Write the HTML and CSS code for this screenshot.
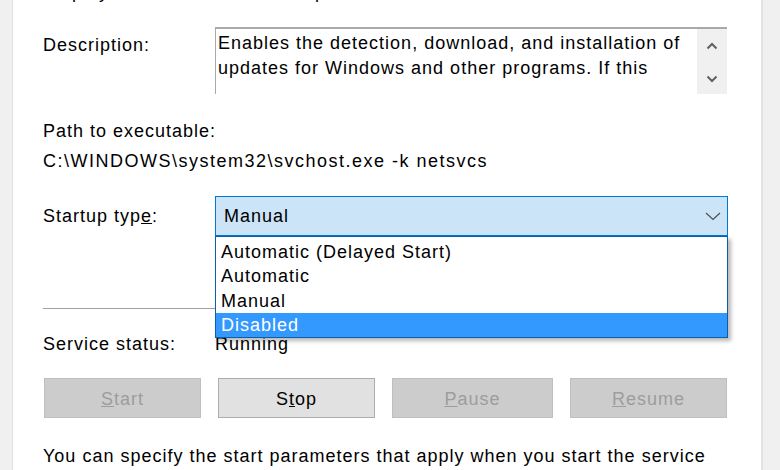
FILE: index.html
```html
<!DOCTYPE html>
<html lang="en">
<head>
    <meta charset="UTF-8">
    <meta name="viewport" content="width=device-width, initial-scale=1.0">
    <title>Windows Update Properties</title>
    <link rel="stylesheet" href="styles.css">
</head>
<body>
    <div class="frame">
        <div class="edge edge-left"></div>

        <div class="panel">
            <div class="row row-name">
                <span class="label">Display name:</span>
                <span>Windows Update</span>
            </div>

            <div class="row row-desc">
                <span class="label">Description:</span>
                <div class="desc-box">
                    <p class="desc-text">Enables the detection, download, and installation of<br>updates for Windows and other programs. If this</p>
                    <div class="scrollbar">
                        <svg width="12" height="8" viewBox="0 0 12 8"><path d="M1.5 6.5 L6 2 L10.5 6.5" fill="none" stroke="#606060" stroke-width="2"/></svg>
                        <svg width="12" height="8" viewBox="0 0 12 8"><path d="M1.5 1.5 L6 6 L10.5 1.5" fill="none" stroke="#606060" stroke-width="2"/></svg>
                    </div>
                </div>
            </div>

            <div class="path">
                <div class="path-label">Path to executable:</div>
                <div class="path-value">C:\WINDOWS\system32\svchost.exe -k netsvcs</div>
            </div>

            <div class="row row-startup">
                <span class="label">Startup typ<u>e</u>:</span>
                <div class="combo-wrap">
                    <div class="combo">
                        <span>Manual</span>
                        <svg width="16" height="9" viewBox="0 0 16 9"><path d="M1 1 L8 7.5 L15 1" fill="none" stroke="#505050" stroke-width="1.2"/></svg>
                    </div>
                    <ul class="combo-list">
                        <li>Automatic (Delayed Start)</li>
                        <li>Automatic</li>
                        <li>Manual</li>
                        <li class="selected">Disabled</li>
                    </ul>
                </div>
            </div>

            <hr class="sep">

            <div class="row row-status">
                <span class="label">Service status:</span>
                <span>Running</span>
            </div>

            <div class="buttons">
                <button class="btn" disabled><u>S</u>tart</button>
                <button class="btn btn-active">S<u>t</u>op</button>
                <button class="btn btn-wide" disabled><u>P</u>ause</button>
                <button class="btn" disabled><u>R</u>esume</button>
            </div>

            <p class="hint">You can specify the start parameters that apply when you start the service<br>from here.</p>
        </div>

        <div class="edge edge-right"></div>
    </div>
</body>
</html>
```

FILE: styles.css
```css
* {
    box-sizing: border-box;
}

body {
    margin: 0;
    background: #f0f0f0;
    font-family: "Liberation Sans", Arial, sans-serif;
    font-size: 18px;
    line-height: 25px;
    letter-spacing: 1px;
    color: #000;
}

.frame {
    display: flex;
    width: 780px;
    height: 470px;
    overflow: hidden;
}

.edge {
    background: #f0f0f0;
}

.edge-left {
    width: 13px;
    border-right: 1px solid #e2e2e2;
}

.edge-right {
    width: 19px;
    border-left: 2px solid #e2e2e2;
}

.panel {
    flex: 1;
    background: #fff;
    padding-left: 30px;
}

.row {
    display: flex;
}

.label {
    width: 172px;
    flex-shrink: 0;
}

.row-name {
    margin-top: -20px;
}

/* description */
.row-desc {
    margin-top: 22px;
    align-items: flex-start;
}

.row-desc .label {
    margin-top: 5.5px;
}

.desc-box {
    display: flex;
    width: 512px;
    height: 67px;
    border-top: 2px solid #a9a9a9;
    border-left: 1px solid #a9a9a9;
    overflow: hidden;
}

.desc-text {
    flex: 1;
    margin: 0;
    padding: 1.5px 0 0 2px;
    white-space: nowrap;
}

.scrollbar {
    width: 30px;
    background: #f0f0f0;
    display: flex;
    flex-direction: column;
    align-items: center;
    justify-content: space-between;
    padding: 13px 0 11px;
}

/* path */
.path {
    margin-top: 24.5px;
}

.path-label {
    margin-bottom: 5px;
}

.path-value {
    letter-spacing: 1.5px;
}

/* startup type */
.row-startup {
    margin-top: 22.5px;
    align-items: center;
}

.combo-wrap {
    position: relative;
    width: 513px;
}

.combo {
    height: 40px;
    background: #cce4f7;
    border: 1px solid #0078d7;
    display: flex;
    align-items: center;
    justify-content: space-between;
    padding: 0 6px 0 8px;
}

.combo-list {
    position: absolute;
    top: 100%;
    left: 0;
    right: 0;
    margin: 0;
    padding: 3px 0 0;
    list-style: none;
    background: #fff;
    border: 1px solid #0a5fa8;
    box-shadow: 3px 3px 4px rgba(0, 0, 0, 0.28);
    z-index: 2;
}

.combo-list li {
    height: 24.3px;
    line-height: 24px;
    padding-left: 5px;
}

.combo-list .selected {
    background: #3399ff;
    color: #fff;
}

.sep {
    margin: 71.5px 0 0;
    width: 684px;
    border: 0;
    border-top: 1px solid #a0a0a0;
}

.row-status {
    margin-top: 23px;
}

/* buttons */
.buttons {
    display: flex;
    gap: 17px;
    margin-top: 21px;
    padding-left: 1px;
}

.btn {
    width: 157px;
    height: 40px;
    font: inherit;
    letter-spacing: inherit;
    color: #000;
    background: #e1e1e1;
    border: 1px solid #adadad;
    padding: 3px 0 0;
}

.btn-wide {
    width: 161px;
}

.btn:disabled {
    background: #cccccc;
    border-color: #bfbfbf;
    color: #9d9d9d;
}

.hint {
    margin: 26.5px 0 0;
}
```
